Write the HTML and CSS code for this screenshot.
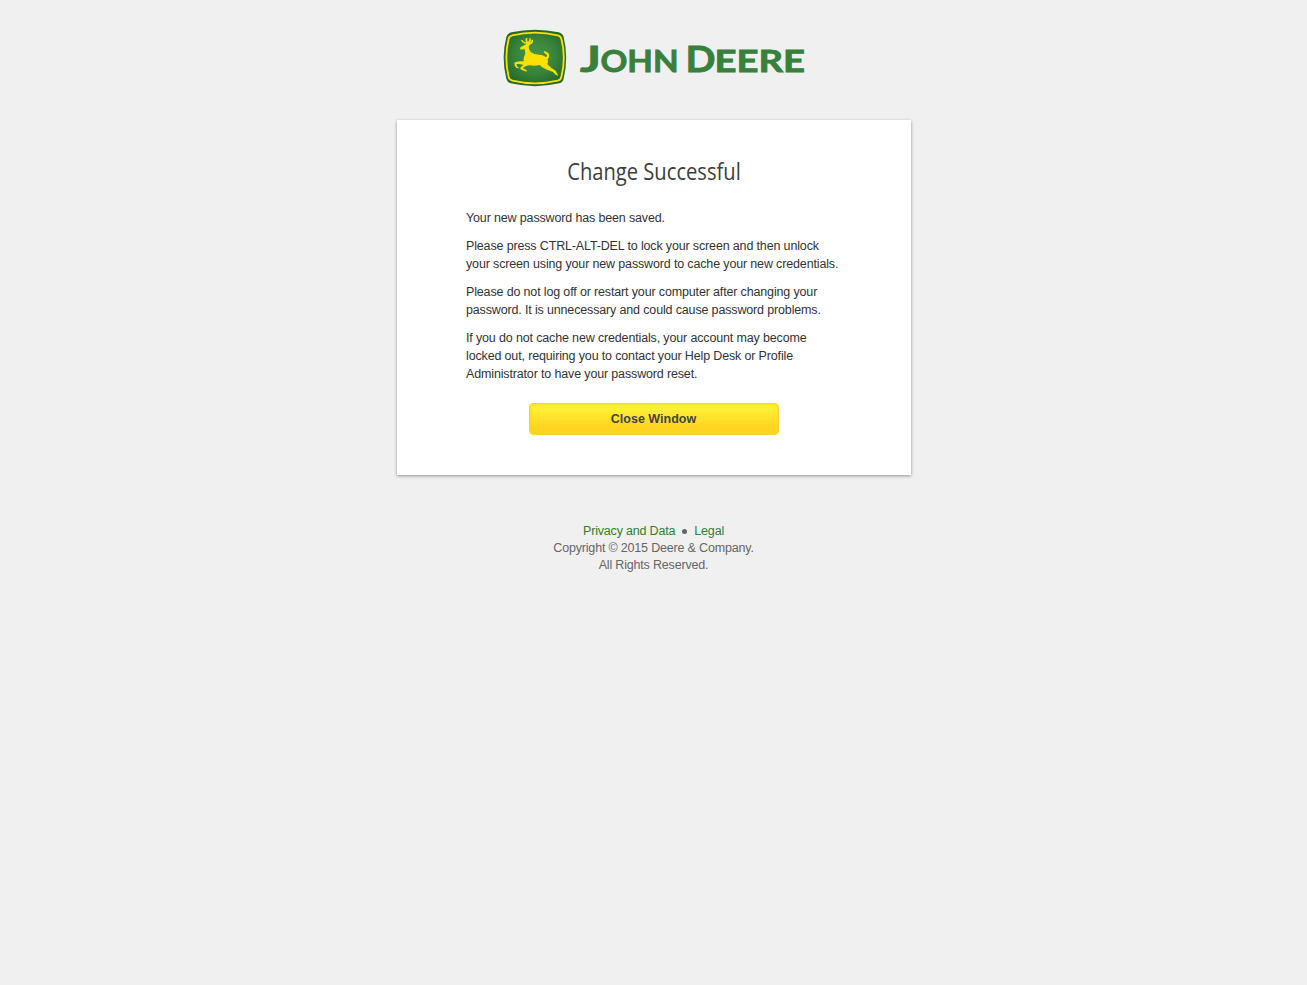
FILE: index.html
```html
<!DOCTYPE html>
<html lang="en">
<head>
<meta charset="utf-8">
<title>Change Successful</title>
<link rel="stylesheet" href="styles.css">
</head>
<body>
<header class="brand">
<svg class="logo" viewBox="503 29 302 58" role="img" aria-label="John Deere">
<defs><radialGradient id="field" cx=".5" cy=".45" r=".65"><stop offset="0" stop-color="#489649"/><stop offset=".55" stop-color="#38833b"/><stop offset="1" stop-color="#216529"/></radialGradient></defs>
<g transform="translate(498 24) scale(.33333)">
<path fill="#28692d" d="M40 25Q111 9 182 25Q194 28 197 39Q212 100 197 164Q194 175 184 178Q111 195 38 178Q28 175 25 164Q9 100 25 39Q28 28 40 25Z"/>
<path fill="url(#field)" stroke="#fce004" stroke-width="5.5" d="M43 34Q111 18 179 34Q188 36 190 44Q205 100 190 159Q188 168 179 170Q111 186 43 170Q34 168 32 159Q18 100 32 44Q34 36 43 34Z"/>
<path fill="#fce004" d="M66 71Q74 65 82 62L86 59Q75 60 69 49L73 48Q77 56 84 54Q80 48 84 42L88 42Q85 49 90 54Q96 51 94 43L98 43Q101 51 95 57Q101 54 101 47L105 47Q107 58 95 63L92 67Q91 77 98 84Q108 92 123 92Q135 92 143 99Q149 98 146 92Q138 90 137 82Q145 81 151 88Q157 98 149 106Q151 115 148 121Q158 132 173 140L181 156L174 153L165 144L144 136Q132 131 125 123Q108 127 96 124Q88 124 80 128L74 132L86 139L86 143L70 137Q64 132 70 128L76 122Q65 119 56 120L57 127L64 133L56 132L50 125L49 116Q56 110 78 112Q74 103 82 90L80 75L68 77Z"/>
</g>
<g class="wordmark">
<text x="580" y="71.5" font-size="36" textLength="21" lengthAdjust="spacingAndGlyphs">J</text>
<text x="600.5" y="71.5" font-size="29.5" textLength="78" lengthAdjust="spacingAndGlyphs">OHN</text>
<text x="685.5" y="71.5" font-size="36" textLength="30" lengthAdjust="spacingAndGlyphs">D</text>
<text x="714.5" y="71.5" font-size="29.5" textLength="90.5" lengthAdjust="spacingAndGlyphs">EERE</text>
</g>
</svg>
</header>
<main class="panel">
<h1 class="title">Change Successful</h1>
<div class="copy">
<p>Your new password has been saved.</p>
<p>Please press CTRL-ALT-DEL to lock your screen and then unlock<br>your screen using your new password to cache your new credentials.</p>
<p>Please do not log off or restart your computer after changing your<br>password. It is unnecessary and could cause password problems.</p>
<p>If you do not cache new credentials, your account may become<br>locked out, requiring you to contact your Help Desk or Profile<br>Administrator to have your password reset.</p>
</div>
<button class="close" type="button">Close Window</button>
</main>
<footer class="footer">
<div class="links"><a href="#">Privacy and Data</a><span class="dot"></span><a href="#">Legal</a></div>
<div>Copyright © 2015 Deere &amp; Company.</div>
<div>All Rights Reserved.</div>
</footer>
</body>
</html>
```
FILE: styles.css
```css
body {
  margin: 0;
  background: #f0f0f0;
  color: #333;
  font: 12px/18px "Liberation Sans", Arial, sans-serif;
}
.brand {
  display: flex;
  justify-content: center;
  padding-top: 29px;
}
.logo { width: 302px; height: 58px; }
.wordmark {
  fill: #38803b;
  stroke: #38803b;
  stroke-width: .8px;
  font-family: Lato, sans-serif;
  font-weight: 700;
}
.panel {
  box-sizing: border-box;
  width: 514px;
  height: 355px;
  margin: 33px auto 0;
  padding: 35px 69px 0;
  background: #fff;
  box-shadow: 0 1px 3px rgba(0, 0, 0, .4);
}
.title {
  margin: 0;
  color: #3d3d3d;
  font: 400 24px/32px "Open Sans", sans-serif;
  text-align: center;
  white-space: nowrap;
  transform: scaleX(.84);
}
.copy {
  margin-top: 22px;
  padding-left: .5px;
  font-size: 12.5px;
  letter-spacing: -.15px;
  white-space: nowrap;
}
.copy p { margin: 0 0 10px; }
.close {
  display: block;
  width: 250px;
  height: 32px;
  margin: 20px auto 0;
  padding: 0;
  border: 1px solid #fbd12b;
  border-radius: 4px;
  background: linear-gradient(#fff037 15%, #ffd320 80%);
  box-shadow: inset 0 0 5px #ffd929;
  color: #444;
  font: 700 12.5px/28px "Liberation Sans", Arial, sans-serif;
}
.footer {
  margin-top: 48px;
  color: #666;
  font-size: 12.5px;
  letter-spacing: -.18px;
  line-height: 17px;
  text-align: center;
}
.links {
  display: flex;
  align-items: center;
  justify-content: center;
  gap: 7px;
}
.links a { color: #367c2b; text-decoration: none; }
.dot {
  width: 5px;
  height: 5px;
  border-radius: 50%;
  background: #666;
}
```
